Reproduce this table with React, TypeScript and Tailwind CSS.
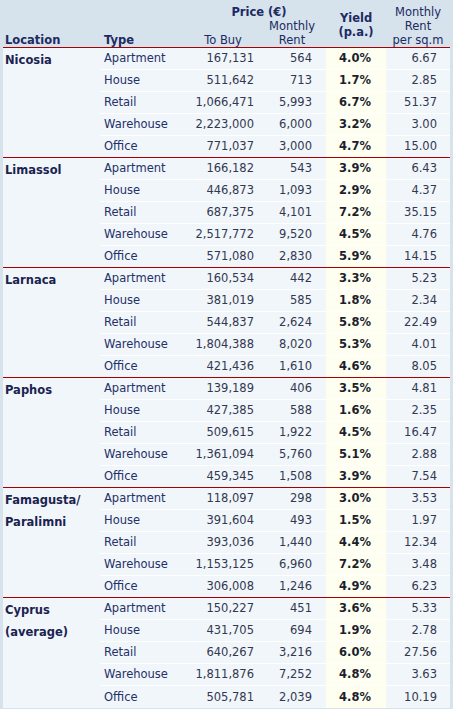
import React from "react";

type Row = [string, string, string, string, string];

type Group = {
  location: string[];
  rows: Row[];
};

const groups: Group[] = [
  {
    location: ["Nicosia"],
    rows: [
      ["Apartment", "167,131", "564", "4.0%", "6.67"],
      ["House", "511,642", "713", "1.7%", "2.85"],
      ["Retail", "1,066,471", "5,993", "6.7%", "51.37"],
      ["Warehouse", "2,223,000", "6,000", "3.2%", "3.00"],
      ["Office", "771,037", "3,000", "4.7%", "15.00"],
    ],
  },
  {
    location: ["Limassol"],
    rows: [
      ["Apartment", "166,182", "543", "3.9%", "6.43"],
      ["House", "446,873", "1,093", "2.9%", "4.37"],
      ["Retail", "687,375", "4,101", "7.2%", "35.15"],
      ["Warehouse", "2,517,772", "9,520", "4.5%", "4.76"],
      ["Office", "571,080", "2,830", "5.9%", "14.15"],
    ],
  },
  {
    location: ["Larnaca"],
    rows: [
      ["Apartment", "160,534", "442", "3.3%", "5.23"],
      ["House", "381,019", "585", "1.8%", "2.34"],
      ["Retail", "544,837", "2,624", "5.8%", "22.49"],
      ["Warehouse", "1,804,388", "8,020", "5.3%", "4.01"],
      ["Office", "421,436", "1,610", "4.6%", "8.05"],
    ],
  },
  {
    location: ["Paphos"],
    rows: [
      ["Apartment", "139,189", "406", "3.5%", "4.81"],
      ["House", "427,385", "588", "1.6%", "2.35"],
      ["Retail", "509,615", "1,922", "4.5%", "16.47"],
      ["Warehouse", "1,361,094", "5,760", "5.1%", "2.88"],
      ["Office", "459,345", "1,508", "3.9%", "7.54"],
    ],
  },
  {
    location: ["Famagusta/", "Paralimni"],
    rows: [
      ["Apartment", "118,097", "298", "3.0%", "3.53"],
      ["House", "391,604", "493", "1.5%", "1.97"],
      ["Retail", "393,036", "1,440", "4.4%", "12.34"],
      ["Warehouse", "1,153,125", "6,960", "7.2%", "3.48"],
      ["Office", "306,008", "1,246", "4.9%", "6.23"],
    ],
  },
  {
    location: ["Cyprus", "(average)"],
    rows: [
      ["Apartment", "150,227", "451", "3.6%", "5.33"],
      ["House", "431,705", "694", "1.9%", "2.78"],
      ["Retail", "640,267", "3,216", "6.0%", "27.56"],
      ["Warehouse", "1,811,876", "7,252", "4.8%", "3.63"],
      ["Office", "505,781", "2,039", "4.8%", "10.19"],
    ],
  },
];

const App = () => {
  return (
    <div className="w-[453px] h-[709px] bg-[#d6e2ec] pl-[3px] font-['DejaVu_Sans',Verdana,sans-serif] text-[11.5px]">
      <table className="w-[447px] table-fixed border-collapse">
        <colgroup>
          <col className="w-[97px]" />
          <col className="w-[90px]" />
          <col className="w-[68px]" />
          <col className="w-[68px]" />
          <col className="w-[60px]" />
          <col className="w-[64px]" />
        </colgroup>
        <thead className="text-[#202a62] leading-[14px]">
          <tr className="h-[19px]">
            <th rowSpan={2} className="text-left align-bottom pl-[2px] font-bold">
              Location
            </th>
            <th rowSpan={2} className="text-left align-bottom pl-[4px] font-bold">
              Type
            </th>
            <th colSpan={2} className="text-center align-bottom font-bold pl-[2px]">
              Price (€)
            </th>
            <th rowSpan={2} className="text-center align-middle font-bold pt-[2px]">
              Yield
              <br />
              (p.a.)
            </th>
            <th rowSpan={2} className="text-center align-bottom font-normal">
              Monthly
              <br />
              Rent
              <br />
              per sq.m
            </th>
          </tr>
          <tr className="h-[28px]">
            <th className="text-center align-bottom font-normal pr-[2px]">To Buy</th>
            <th className="text-center align-bottom font-normal">
              Monthly
              <br />
              Rent
            </th>
          </tr>
        </thead>
        {groups.map((g) => (
          <tbody key={g.location.join("")} className="bg-[#f1f6fa]">
            {g.rows.map((r, i) => {
              const line = i === 0 ? "border-t border-t-[#a80000]" : "border-t border-t-white";
              return (
                <tr key={r[0]} className="h-[22px]">
                  {i === 0 && (
                    <td
                      rowSpan={5}
                      className="border-t border-t-[#a80000] align-top pl-[2px] pt-[1px] font-bold text-[#1b2350] leading-[22px]"
                    >
                      {g.location.map((l) => (
                        <div key={l}>{l}</div>
                      ))}
                    </td>
                  )}
                  <td className={`${line} pl-[4px] pt-[1px] text-[#243068]`}>{r[0]}</td>
                  <td className={`${line} text-right pr-[4px] pt-[1px] text-[#333850]`}>{r[1]}</td>
                  <td className={`${line} text-right pr-[14px] pt-[1px] text-[#333850]`}>{r[2]}</td>
                  <td className={`${line} text-center font-bold bg-[#fefff0] text-[#1a1e2e] pr-[2px] pt-[1px]`}>
                    {r[3]}
                  </td>
                  <td className={`${line} text-right pr-[13px] pt-[1px] text-[#333850]`}>{r[4]}</td>
                </tr>
              );
            })}
          </tbody>
        ))}
      </table>
    </div>
  );
};

export default App;
